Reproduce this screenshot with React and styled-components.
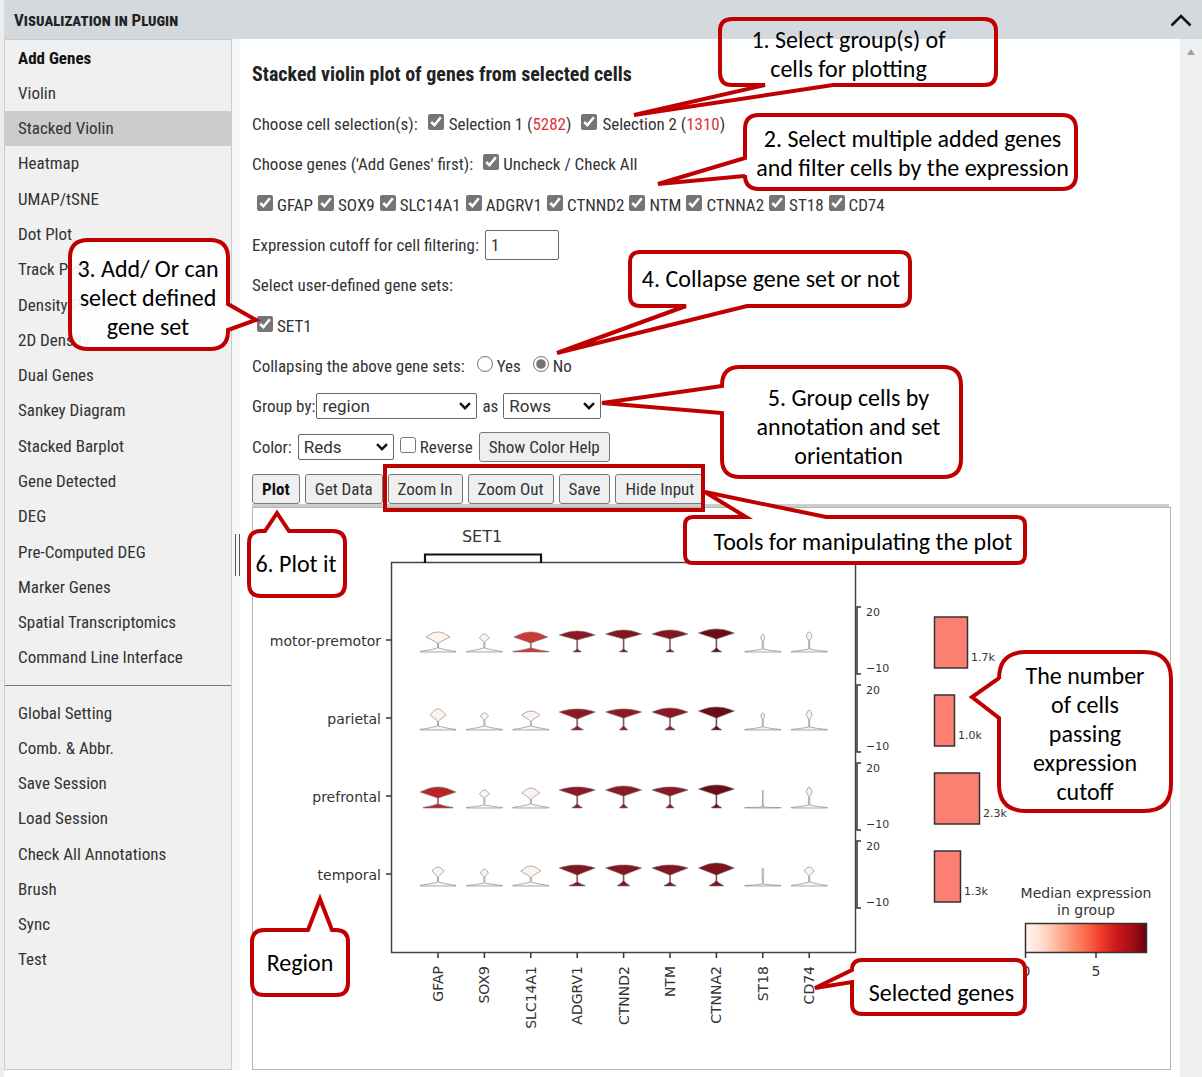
import React, { useState } from 'react';
import styled, { createGlobalStyle } from 'styled-components';

const UI_FONT = '"Roboto Condensed", Roboto, sans-serif';
const NOTE_FONT = 'Carlito, Lato, sans-serif';
const PLOT_FONT = '"DejaVu Sans", sans-serif';
const NOTE_RED = '#c00000';

const GlobalStyle = createGlobalStyle`
  *, *::before, *::after { box-sizing: border-box; }
  body {
    margin: 0;
    background: #fff;
    color: #333;
    font: 17px/20px ${UI_FONT};
  }
  button, input, select { font: inherit; color: inherit; margin: 0; }
`;

/* ---------- window frame ---------- */

const Page = styled.div`
  position: relative;
  min-height: 100vh;
  display: flex;
  flex-direction: column;
  border-left: 4px solid #ededed;
`;

const Header = styled.header`
  display: flex;
  align-items: center;
  justify-content: space-between;
  height: 39px;
  padding: 0 10px;
  background: #d3d9dc;
`;

const HeaderTitle = styled.h1`
  margin: 0;
  font-size: 17px;
  line-height: 20px;
  font-weight: 700;
  font-variant: small-caps;
  color: #222;
`;

const CollapseButton = styled.button`
  display: flex;
  padding: 0;
  border: 0;
  background: none;
  color: #111;
`;

const Body = styled.div`
  flex: 1;
  display: flex;
  align-items: stretch;
`;

const Sidebar = styled.nav`
  flex: none;
  width: 228px;
  margin-bottom: 7px;
  background: #f0f0f0;
  border: 1px solid #ccc;
`;

const MenuList = styled.ul`
  display: grid;
  grid-auto-rows: 1fr;
  height: ${p => p.$height}px;
  margin: 0;
  padding: 0;
  list-style: none;
`;

const MenuItem = styled.li`
  display: flex;
  background: ${p => (p.$active ? '#ccc' : 'none')};
`;

const MenuLink = styled.a`
  flex: 1;
  display: flex;
  align-items: center;
  padding: 0 13px;
  color: ${p => (p.$strong ? '#111' : '#333')};
  font-weight: ${p => (p.$strong ? 700 : 400)};
  text-decoration: none;
`;

const MenuDivider = styled.hr`
  margin: 10px 0 9px;
  border: 0;
  border-top: 1px solid #777;
`;

const Splitter = styled.div`
  flex: none;
  display: flex;
  align-items: center;
  justify-content: flex-end;
  width: 8px;
  margin-bottom: 7px;
  background: #f7f7f7;
`;

const Grip = styled.div`
  width: 5px;
  height: 42px;
  border: 1px solid #555;
  border-width: 0 1px;
`;

const Main = styled.main`
  flex: 1;
  display: flex;
  flex-direction: column;
  min-width: 0;
  padding: 14px 9px 7px 12px;
`;

const ScrollTrack = styled.div`
  flex: none;
  width: 22px;
  padding-top: 0;
  background: #f0f0f0;
  text-align: center;
`;

/* ---------- plot form ---------- */

const Title = styled.h2`
  margin: 0;
  font-size: 20px;
  line-height: 42px;
  font-weight: 700;
  color: #222;
`;

const Form = styled.form`
  display: flex;
  flex-direction: column;
  margin-right: 2px;
`;

const Fields = styled.div`
  display: grid;
  grid-auto-rows: 1fr;
  height: 363px;
  margin-top: 9px;
`;

const Field = styled.div`
  display: flex;
  align-items: center;
  gap: ${p => p.$gap || 10}px;
  padding-left: ${p => p.$indent || 0}px;
  white-space: nowrap;
`;

const CheckLabel = styled.label`
  display: flex;
  align-items: center;
  gap: ${p => p.$gap || 4}px;
`;

const Check = styled.input.attrs({ type: 'checkbox' })`
  width: 16px;
  height: 16px;
  margin-bottom: 4px;
  accent-color: #757575;
`;

const Radio = styled.input.attrs({ type: 'radio' })`
  width: 16px;
  height: 16px;
  margin-bottom: 4px;
  accent-color: #757575;
`;

const Count = styled.span`
  color: #e0313a;
`;

const NumberBox = styled.input.attrs({ type: 'text' })`
  width: 74px;
  height: 30px;
  padding: 0 5px;
  border: 1px solid #666;
  border-radius: 2px;
  background: #fff;
`;

const SelectWrap = styled.span`
  position: relative;
  display: inline-flex;
  width: ${p => p.$width}px;
`;

const SelectBox = styled.select`
  appearance: none;
  width: 100%;
  height: 26px;
  padding: 0 24px 0 5px;
  border: 1px solid #666;
  border-radius: 2px;
  background: #fff;
  font-family: Roboto, sans-serif;
  font-size: 17px;
  line-height: 22px;
`;

const SelectArrow = styled.svg`
  position: absolute;
  right: 6px;
  top: 9px;
  pointer-events: none;
`;

const Button = styled.button`
  height: 30px;
  padding: 0 9px;
  border: 1px solid #777;
  border-radius: 3px;
  background: #efefef;
  color: ${p => (p.$strong ? '#111' : '#333')};
  font-weight: ${p => (p.$strong ? 700 : 400)};
`;

const Toolbar = styled.div`
  display: flex;
  align-items: center;
  gap: 5px;
  margin-top: 7px;
  border-bottom: 3px solid #ccc;
`;

const PlotPanel = styled.section`
  flex: 1;
  min-height: 563px;
  border: 1px solid #b4b4b4;
`;

const PlotSvg = styled.svg`
  display: block;
  font-family: ${PLOT_FONT};
  overflow: visible;
`;

/* ---------- annotation callouts ---------- */

const Callout = styled.aside`
  position: absolute;
  left: ${p => p.$x - 4}px;
  top: ${p => p.$y}px;
  width: ${p => p.$w}px;
  height: ${p => p.$h}px;
`;

const CalloutShape = styled.svg`
  position: absolute;
  inset: 0;
  overflow: visible;
  pointer-events: none;
`;

const CalloutText = styled.p`
  position: relative;
  display: flex;
  align-items: center;
  justify-content: center;
  height: 100%;
  margin: 0;
  padding: ${p => p.$pad || '0'};
  color: #000;
  font: 24px/29px ${NOTE_FONT};
  text-align: center;
  white-space: pre;
`;

const Highlight = styled.div`
  position: absolute;
  left: 379px;
  top: 464px;
  width: 322px;
  height: 48px;
  border: 4px solid ${NOTE_RED};
  pointer-events: none;
`;

// Rounded box with a pointed tail that leaves one side between `from` and `to`.
function bubblePath(w, h, r, { side, from, to, tip }) {
  const t = `L${tip[0]} ${tip[1]}`;
  const top = side === 'top' ? `L${from} 0${t}L${to} 0` : '';
  const right = side === 'right' ? `L${w} ${from}${t}L${w} ${to}` : '';
  const bottom = side === 'bottom' ? `L${to} ${h}${t}L${from} ${h}` : '';
  const left = side === 'left' ? `L0 ${to}${t}L0 ${from}` : '';
  return `M${r} 0${top}L${w - r} 0Q${w} 0 ${w} ${r}${right}L${w} ${h - r}Q${w} ${h} ${w - r} ${h}` +
    `${bottom}L${r} ${h}Q0 ${h} 0 ${h - r}${left}L0 ${r}Q0 0 ${r} 0Z`;
}

const NOTES = [
  { x: 720, y: 19, w: 276, h: 66, r: 12, fill: 'none', pad: '3px 19px 0 0', text: '1. Select group(s) of\ncells for plotting', tail: { side: 'bottom', from: 45, to: 113, tip: [-86, 96] } },
  { x: 745, y: 115, w: 331, h: 74, r: 14, fill: '#fff', pad: '2px 0 0 4px', text: '2. Select multiple added genes\nand filter cells by the expression', tail: { side: 'left', from: 43, to: 61, tip: [-87, 69] } },
  { x: 70, y: 240, w: 158, h: 109, r: 18, fill: 'rgba(255,255,255,.92)', pad: '5px 2px 0 0', text: '3. Add/ Or can\nselect defined\ngene set', tail: { side: 'right', from: 64, to: 90, tip: [186, 80] } },
  { x: 630, y: 252, w: 280, h: 54, r: 10, fill: '#fff', pad: '0 0 2px 2px', text: '4. Collapse gene set or not', tail: { side: 'bottom', from: 56, to: 117, tip: [-73, 101] } },
  { x: 722, y: 367, w: 239, h: 110, r: 18, fill: '#fff', pad: '9px 0 0 14px', text: '5. Group cells by\nannotation and set\norientation', tail: { side: 'left', from: 19, to: 46, tip: [-120, 36] } },
  { x: 249, y: 531, w: 96, h: 65, r: 12, fill: '#fff', pad: '0 2px 1px 0', text: '6. Plot it', tail: { side: 'top', from: 16, to: 40, tip: [28, -18] } },
  { x: 685, y: 517, w: 340, h: 46, r: 8, fill: '#fff', pad: '2px 0 0 16px', text: 'Tools for manipulating the plot', tail: { side: 'top', from: 61, to: 141, tip: [20, -25] } },
  { x: 999, y: 652, w: 172, h: 159, r: 27, fill: '#fff', pad: '3px 0 0 0', text: 'The number\nof cells\npassing\nexpression\ncutoff', tail: { side: 'left', from: 26, to: 66, tip: [-27, 45] } },
  { x: 852, y: 960, w: 173, h: 54, r: 10, fill: 'rgba(255,255,255,.9)', pad: '11px 0 0 6px', text: 'Selected genes', tail: { side: 'left', from: 10, to: 22, tip: [-37, 28] } },
  { x: 252, y: 930, w: 96, h: 65, r: 12, fill: '#fff', pad: '0', text: 'Region', tail: { side: 'top', from: 56, to: 80, tip: [68, -31] } },
];

/* ---------- data ---------- */

const MENU_MAIN = ['Add Genes', 'Violin', 'Stacked Violin', 'Heatmap', 'UMAP/tSNE', 'Dot Plot', 'Track Plot', 'Density Plot',
  '2D Density', 'Dual Genes', 'Sankey Diagram', 'Stacked Barplot', 'Gene Detected', 'DEG', 'Pre-Computed DEG',
  'Marker Genes', 'Spatial Transcriptomics', 'Command Line Interface'];
const MENU_TOOLS = ['Global Setting', 'Comb. & Abbr.', 'Save Session', 'Load Session', 'Check All Annotations', 'Brush', 'Sync', 'Test'];
const GENES = ['GFAP', 'SOX9', 'SLC14A1', 'ADGRV1', 'CTNND2', 'NTM', 'CTNNA2', 'ST18', 'CD74'];

const PALE = '#fdf3ef';
// Heights above the base line of the head's top, widest point and bottom; then half widths of head and foot.
const v = (top, mid, low, half, foot, footH, fill = PALE) => ({ top, mid, low, half, foot, footH, fill });
const ROWS = [
  { name: 'motor-premotor', cells: '1.7k', bar: 33, violins: [
    v(20, 15, 10, 12, 18, 4), v(18, 14, 11, 5, 18, 4), v(20, 15, 10, 17, 18, 4, '#cb3a36'),
    v(21, 17, 13, 18, 4, 3, '#8c1923'), v(22, 18, 14, 18, 4, 3, '#84161f'), v(22, 18, 14, 18, 4, 3, '#84161f'),
    v(23, 19, 14, 18, 5, 4, '#6b0d19'), v(18, 14, 11, 2, 18, 3), v(20, 16, 12, 3, 18, 3)] },
  { name: 'parietal', cells: '1.0k', bar: 20, violins: [
    v(21, 15, 10, 8, 18, 4), v(17, 14, 11, 4, 18, 4), v(19, 15, 10, 9, 18, 4),
    v(21, 18, 12, 18, 6, 4, '#8c1923'), v(21, 18, 13, 18, 4, 4, '#8c1923'), v(22, 18, 13, 18, 5, 4, '#8c1923'),
    v(23, 19, 13, 18, 5, 4, '#6b0d19'), v(17, 14, 11, 2, 18, 3), v(20, 15, 11, 3, 18, 3)] },
  { name: 'prefrontal', cells: '2.3k', bar: 45, violins: [
    v(21, 16, 11, 18, 15, 4, '#bb252a'), v(18, 14, 11, 5, 18, 3), v(20, 15, 10, 9, 18, 4),
    v(21, 18, 13, 18, 5, 4, '#8c1923'), v(22, 18, 13, 18, 4, 4, '#8c1923'), v(21, 18, 13, 18, 4, 4, '#8c1923'),
    v(23, 19, 14, 18, 5, 4, '#6b0d19'), v(18, 10, 4, 0, 18, 1), v(21, 16, 12, 3, 18, 3)] },
  { name: 'temporal', cells: '1.3k', bar: 26, violins: [
    v(19, 15, 10, 6, 18, 4), v(17, 13, 10, 4, 18, 3), v(20, 15, 10, 10, 18, 4),
    v(21, 18, 12, 18, 8, 4, '#84161f'), v(21, 18, 12, 18, 6, 5, '#84161f'), v(21, 18, 12, 18, 6, 4, '#84161f'),
    v(23, 18, 12, 18, 7, 5, '#7c131d'), v(18, 14, 11, 1, 18, 2), v(19, 15, 11, 5, 18, 4)] },
];

/* ---------- pieces ---------- */

const Tick = ({ label, gap, ...rest }) => (
  <CheckLabel $gap={gap}><Check defaultChecked {...rest} />{label}</CheckLabel>
);

const Select = ({ width, label, options }) => (
  <SelectWrap $width={width}>
    <SelectBox aria-label={label}>{options.map(o => <option key={o}>{o}</option>)}</SelectBox>
    <SelectArrow width="12" height="8" viewBox="0 0 12 8" fill="none" stroke="#111" strokeWidth="2.4" aria-hidden="true">
      <path d="M1 1.2 6 6.2 11 1.2" />
    </SelectArrow>
  </SelectWrap>
);

function Violin({ x, y, d }) {
  const n = 0.5;
  const { top, mid, low, half, foot, footH } = d;
  const path = `M${x} ${y - top}` +
    `C${x - half * 0.5} ${y - top} ${x - half * 0.8} ${y - mid - 1} ${x - half} ${y - mid}` +
    `C${x - half * 0.7} ${y - mid + 2} ${x - half * 0.3} ${y - low - 1} ${x - n} ${y - low + 1}` +
    `L${x - n} ${y - footH}Q${x - foot * 0.4} ${y - footH / 2} ${x - foot} ${y - 0.5}L${x - foot} ${y}` +
    `L${x + foot} ${y}L${x + foot} ${y - 0.5}Q${x + foot * 0.4} ${y - footH / 2} ${x + n} ${y - footH}L${x + n} ${y - low + 1}` +
    `C${x + half * 0.3} ${y - low - 1} ${x + half * 0.7} ${y - mid + 2} ${x + half} ${y - mid}` +
    `C${x + half * 0.8} ${y - mid - 1} ${x + half * 0.5} ${y - top} ${x} ${y - top}Z`;
  return <path d={path} fill={d.fill} stroke="#777" strokeWidth="0.6" />;
}

const colX = i => 185 + i * 46.4;
const rowY = i => 144 + i * 78;

function Plot() {
  return (
    <PlotSvg width="900" height="540" viewBox="0 0 900 540" role="img" aria-label="Stacked violin plot">
      <defs>
        <linearGradient id="reds">
          <stop offset="0" stopColor="#fff5f0" />
          <stop offset=".125" stopColor="#fee0d2" />
          <stop offset=".25" stopColor="#fcbba1" />
          <stop offset=".375" stopColor="#fc9272" />
          <stop offset=".5" stopColor="#fb6a4a" />
          <stop offset=".625" stopColor="#ef3b2c" />
          <stop offset=".75" stopColor="#cb181d" />
          <stop offset=".875" stopColor="#a50f15" />
          <stop offset="1" stopColor="#67000d" />
        </linearGradient>
      </defs>
      <rect x="138.5" y="54.5" width="464" height="390" fill="none" stroke="#444" strokeWidth="1.5" />
      <path d="M172 55V46.5H288V55" fill="none" stroke="#111" strokeWidth="2.2" />
      <text x="229" y="34" fontSize="16" textAnchor="middle" fill="#333">SET1</text>
      {ROWS.map((row, r) => {
        const y = rowY(r);
        return (
          <g key={row.name}>
            <path d={`M133 ${y - 12}H138`} stroke="#333" strokeWidth="1.5" />
            <text x="128" y={y - 6} fontSize="14" textAnchor="end" fill="#333">{row.name}</text>
            {row.violins.map((d, c) => <Violin key={GENES[c]} x={colX(c)} y={y} d={d} />)}
            <path d={`M608 ${y - 45}H604V${y + 22}H608`} fill="none" stroke="#333" strokeWidth="1.5" />
            <text x="613" y={y - 36} fontSize="11" fill="#333">20</text>
            <text x="613" y={y + 20} fontSize="11" fill="#333">−10</text>
            <rect x="681.5" y={y - 35} width={row.bar} height="51" fill="#fc8072" stroke="#333" strokeWidth="1.5" />
            <text x={685 + row.bar} y={y + 9} fontSize="11" fill="#333">{row.cells}</text>
          </g>
        );
      })}
      {GENES.map((g, c) => (
        <g key={g}>
          <path d={`M${colX(c)} 445V450`} stroke="#333" strokeWidth="1.5" />
          <text transform={`translate(${colX(c) + 5} 458) rotate(-90)`} fontSize="14" textAnchor="end" fill="#333">{g}</text>
        </g>
      ))}
      <text x="833" y="390" fontSize="14" textAnchor="middle" fill="#333">Median expression</text>
      <text x="833" y="407" fontSize="14" textAnchor="middle" fill="#333">in group</text>
      <rect x="772.5" y="415.5" width="121" height="29" fill="url(#reds)" stroke="#333" strokeWidth="1.5" />
      <path d="M772.5 445V450M843 445V450" stroke="#333" strokeWidth="1.5" />
      <text x="773" y="468" fontSize="14" textAnchor="middle" fill="#333">0</text>
      <text x="843" y="468" fontSize="14" textAnchor="middle" fill="#333">5</text>
    </PlotSvg>
  );
}

export default function App() {
  const [collapse, setCollapse] = useState('No');
  return (
    <Page>
      <GlobalStyle />
      <Header>
        <HeaderTitle>Visualization in Plugin</HeaderTitle>
        <CollapseButton type="button" aria-label="Collapse panel">
          <svg width="22" height="14" viewBox="0 0 22 14" fill="none" stroke="currentColor" strokeWidth="2.6" aria-hidden="true">
            <path d="M1.5 12.5 11 3 20.5 12.5" />
          </svg>
        </CollapseButton>
      </Header>
      <Body>
        <Sidebar>
          <MenuList $height={635}>
            {MENU_MAIN.map(m => (
              <MenuItem key={m} $active={m === 'Stacked Violin'}>
                <MenuLink href="#" $strong={m === 'Add Genes'}>{m}</MenuLink>
              </MenuItem>
            ))}
          </MenuList>
          <MenuDivider />
          <MenuList $height={282}>
            {MENU_TOOLS.map(m => <MenuItem key={m}><MenuLink href="#">{m}</MenuLink></MenuItem>)}
          </MenuList>
        </Sidebar>
        <Splitter><Grip /></Splitter>
        <Main>
          <Title>Stacked violin plot of genes from selected cells</Title>
          <Form onSubmit={e => e.preventDefault()}>
            <Fields>
              <Field>
                <span>Choose cell selection(s):</span>
                <Tick gap={5} label={<span>Selection 1 (<Count>5282</Count>)</span>} />
                <Tick gap={5} label={<span>Selection 2 (<Count>1310</Count>)</span>} />
              </Field>
              <Field>
                <span>Choose genes ('Add Genes' first):</span>
                <Tick label="Uncheck / Check All" />
              </Field>
              <Field $indent={5} $gap={5}>
                {GENES.map(g => <Tick key={g} label={g} />)}
              </Field>
              <Field $gap={6}>
                <label htmlFor="cutoff">Expression cutoff for cell filtering:</label>
                <NumberBox id="cutoff" defaultValue="1" />
              </Field>
              <Field><span>Select user-defined gene sets:</span></Field>
              <Field $indent={5}><Tick label="SET1" /></Field>
              <Field $gap={12}>
                <span>Collapsing the above gene sets:</span>
                {['Yes', 'No'].map(o => (
                  <CheckLabel key={o}>
                    <Radio name="collapse" checked={collapse === o} onChange={() => setCollapse(o)} />{o}
                  </CheckLabel>
                ))}
              </Field>
              <Field $gap={5}>
                <CheckLabel as="span" $gap={1}>Group by:<Select width={161} label="Group by" options={['region']} /></CheckLabel>
                <span>as</span>
                <Select width={98} label="Orientation" options={['Rows', 'Columns']} />
              </Field>
              <Field $gap={6}>
                <span>Color:</span>
                <Select width={96} label="Color" options={['Reds', 'Blues']} />
                <CheckLabel><Check />Reverse</CheckLabel>
                <Button type="button">Show Color Help</Button>
              </Field>
            </Fields>
            <Toolbar>
              <Button type="submit" $strong>Plot</Button>
              {['Get Data', 'Zoom In', 'Zoom Out', 'Save', 'Hide Input'].map(b => <Button key={b} type="button">{b}</Button>)}
            </Toolbar>
          </Form>
          <PlotPanel><Plot /></PlotPanel>
        </Main>
        <ScrollTrack>
          <svg width="8" height="6" viewBox="0 0 8 6" aria-hidden="true"><path d="M0 6 4 0 8 6Z" fill="#a3a3a3" /></svg>
        </ScrollTrack>
      </Body>
      <Highlight />
      {NOTES.map(n => (
        <Callout key={n.text} $x={n.x} $y={n.y} $w={n.w} $h={n.h}>
          <CalloutShape width={n.w} height={n.h} aria-hidden="true">
            <path d={bubblePath(n.w, n.h, n.r, n.tail)} fill={n.fill} stroke={NOTE_RED} strokeWidth="4" />
          </CalloutShape>
          <CalloutText $pad={n.pad}>{n.text}</CalloutText>
        </Callout>
      ))}
    </Page>
  );
}
